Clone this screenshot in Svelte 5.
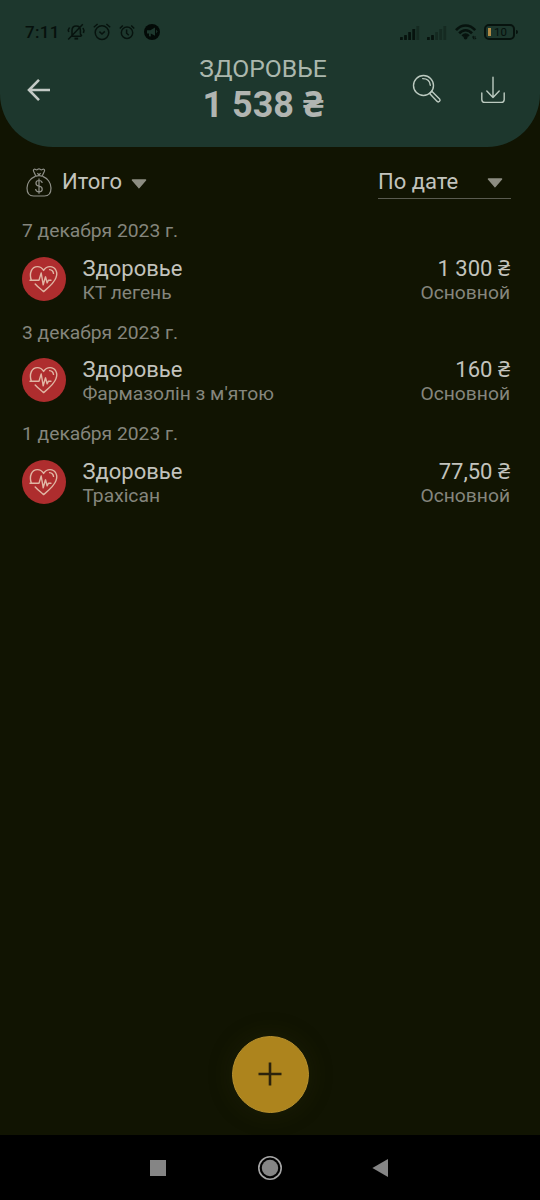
<script>
  let total = $state('1 538 ₴');
  let groups = $state([
    { date: '7 декабря 2023 г.', category: 'Здоровье', note: 'КТ легень', amount: '1 300 ₴', account: 'Основной' },
    { date: '3 декабря 2023 г.', category: 'Здоровье', note: "Фармазолін з м'ятою", amount: '160 ₴', account: 'Основной' },
    { date: '1 декабря 2023 г.', category: 'Здоровье', note: 'Трахісан', amount: '77,50 ₴', account: 'Основной' },
  ]);

  // Number of lit bars per SIM
  const sims = [4, 2];
</script>

{#snippet caret()}
  <svg class="caret" width="16" height="10" viewBox="0 0 16 10">
    <path d="M1.5 1h13L8 8.6z" stroke-width="1.6" stroke-linejoin="round" />
  </svg>
{/snippet}

<main>
  <header>
    <div class="status">
      <span class="time">7:11</span>
      <!-- muted bell -->
      <svg class="bell" width="18" height="18" viewBox="0 0 18 18">
        <path d="M4 13.2h10.5M5 13V7.6C5 4.8 6.8 3 9.2 3s4.2 1.8 4.2 4.6V11l1.4 2M1.2 16.5L15.8 1.2M2.6 4.5L1.2 7l.6 2M16 5l1 2.5-.6 2.5" />
        <path d="M7.500 15.6h3.6" stroke-width="2" />
      </svg>
      <svg class="alarm" width="18" height="18" viewBox="0 0 18 18">
        <circle cx="9" cy="9.6" r="6.8" />
        <path d="M.8 4.2L4.6 1M17.2 4.2L13.4 1M6.4 8.6L9 11l2.8-2.6" />
      </svg>
      <svg class="alarm small" width="16" height="16" viewBox="0 0 16 16">
        <circle cx="8" cy="8.8" r="5.7" />
        <path d="M.8 4.6L3.8 1.4M15.2 4.6l-3-3.2M7.6 5.6v3.6l2.2 2" />
      </svg>
      <svg class="horn" width="16" height="16" viewBox="0 0 16 16">
        <circle cx="8" cy="8" r="8" />
        <path d="M3 6.2h3.4L11 3.6v8.2L6.8 9.6v3L5 12.2V9.6H3zM12.2 5.6l1.4 2-1.4 2z" />
      </svg>
      <div class="signals">
        {#each sims as lit}
          <svg width="20" height="15" viewBox="0 0 20 15">
            {#each [3, 5, 8, 11, 14] as h, i}
              <rect class:off={i >= lit} x={i * 4.1} y={15 - h} width="2.8" height={h} rx=".5" />
            {/each}
          </svg>
        {/each}
      </div>
      <svg class="wifi" width="22" height="16" viewBox="0 0 22 16">
        <path d="M1 6.2C6.4-.1 14.8-.1 20.2 6.2M4.2 9.4c3.8-4.2 9-4.2 12.8 0M7.4 12.2c2-2.1 4.4-2.1 6.4 0" />
        <circle cx="10.6" cy="13.6" r="1.9" />
        <path class="tiny" d="M18.4 15.2v-3l-1.3 1.2M20 12.2v3l1.2-1.2" />
      </svg>
      <div class="battery"><i></i><span>10</span></div>
    </div>
    <div class="bar">
      <svg class="back" width="24" height="24" viewBox="0 0 24 24">
        <path d="M23 12H2.2M12 1.8L2 12l10 10.2" />
      </svg>
      <div class="heading">
        <h1>ЗДОРОВЬЕ</h1>
        <strong>{total}</strong>
      </div>
      <svg class="tool search" width="30" height="30" viewBox="0 0 30 30">
        <circle cx="11.5" cy="11.5" r="10" />
        <path d="M10.7 4.6c4.6 0 7.2 2.6 7.6 6.6M17.6 19.4l2.2-2.2 7.8 7.8c1.4 1.6-.8 3.8-2.4 2.4z" />
      </svg>
      <svg class="tool" width="26" height="28" viewBox="0 0 26 28">
        <path d="M13 1.2v20.4M6.8 15L13 21.6l6.2-6.6M1.8 17v6.4q0 3 3 3h16.4q3 0 3-3V17" />
      </svg>
    </div>
  </header>

  <div class="filters">
    <svg class="bag" width="26" height="29" viewBox="0 0 26 29">
      <path d="M9.2 8.4C4.4 10.4 1 15 1 20c0 5 2.6 8 6.6 8h10.8c4 0 6.6-3 6.6-8 0-5-3.4-9.6-8.2-11.6" />
      <path d="M9.2 8.4q3.8-1.4 7.6 0M9.6 7.4L7.6 3.2c-.6-1.6.6-2.6 2-1.8 1 .6 1.4.6 2 0q1.4-1.2 2.8 0c.6.6 1 .6 2 0 1.4-.8 2.6.2 2 1.8l-2 4.2M11.4 5.2L13 7l1.6-1.8" />
      <path d="M16.2 15c-.2-1.6-1.4-2.5-3.2-2.5-3.9 0-4.2 5 0 5.6 4.4.6 4.2 5.7 0 5.7-1.9 0-3.2-1-3.4-2.8M13 10.6v15.2" />
    </svg>
    <span class="scope">Итого</span>
    {@render caret()}
    <div class="sort">
      <span>По дате</span>
      {@render caret()}
    </div>
  </div>

  <section>
    {#each groups as item}
      <h2>{item.date}</h2>
      <div class="row">
        <div class="badge">
          <svg width="30" height="28" viewBox="0 0 30 28">
            <path d="M1 15.2h9l2.200-7.2 2 11.800 2.300-8 1.600 6 1.400-2.600H22" />
            <path d="M2.200 14.800C0 8 2.800 1.600 8.400 1.600c3 0 4.800 1.600 6.200 3.800 1.400-2.200 3.400-3.800 6.400-3.800 5.200 0 8.200 5.400 6 11-1.800 5.400-7 9.400-12.400 14-3-2.600-6-4.800-8.400-7.600M20.600 4.600c2.200.2 3.600 1.600 3.900 3.800" />
          </svg>
        </div>
        <div class="info">
          <span class="main">{item.category}</span>
          <span class="sub">{item.note}</span>
        </div>
        <div class="info right">
          <span class="main">{item.amount}</span>
          <span class="sub">{item.account}</span>
        </div>
      </div>
    {/each}
  </section>

  <button class="add" aria-label="Добавить">
    <svg width="24" height="24" viewBox="0 0 24 24"><path d="M12 .5v23M.5 12h23" /></svg>
  </button>

  <nav>
    <svg width="240" height="26" viewBox="0 0 240 26">
      <rect x="0" y="5" width="16" height="16" />
      <circle cx="120" cy="13" r="8.2" />
      <circle class="ring" cx="120" cy="13" r="11.2" />
      <path d="M222.4 13L238 4v18z" />
    </svg>
  </nav>
</main>

<style>
  :global(body) {
    background: #111402;
  }

  main {
    display: flex;
    flex-direction: column;
    align-items: stretch;
    box-sizing: border-box;
    width: 540px;
    height: 1200px;
    overflow: hidden;
    background: #111402;
    color: #c2c3bd;
    font-family: Roboto, 'Noto Sans', sans-serif;
  }

  svg {
    display: block;
    flex: none;
    fill: none;
  }

  header {
    box-sizing: border-box;
    height: 147px;
    background: #1d372d;
    border-radius: 0 0 53px 53px;
  }

  .status {
    display: flex;
    align-items: center;
    box-sizing: border-box;
    height: 55px;
    padding: 9px 22px 0 25px;
    color: #06100c;
  }

  .status svg {
    stroke: #07130e;
    stroke-width: 1.5;
  }

  .time {
    width: 42px;
    font-size: 17px;
    font-weight: 500;
    letter-spacing: 0.3px;
  }

  .alarm {
    margin-left: 8px;
  }

  .alarm.small {
    margin-left: 8px;
  }

  .status .horn {
    margin-left: 9px;
    stroke: none;
    fill: #030a07;
  }

  .horn path {
    fill: #1d372d;
  }

  .signals {
    display: flex;
    gap: 7px;
    margin-left: auto;
  }

  .signals svg {
    stroke: none;
    fill: #07130e;
  }

  .signals .off {
    fill: #152a21;
  }

  .status .wifi {
    margin-left: 8px;
    stroke-width: 2.6;
  }

  .wifi circle {
    stroke: none;
    fill: #07130e;
  }

  .wifi .tiny {
    stroke-width: 1;
  }

  .battery {
    position: relative;
    display: flex;
    align-items: center;
    box-sizing: border-box;
    width: 31px;
    height: 16px;
    margin: 0 3px 0 7px;
    padding-left: 2px;
    border: 2px solid #07130e;
    border-radius: 5px;
    font-size: 11.5px;
  }

  .battery::after {
    content: '';
    position: absolute;
    right: -5px;
    top: 4px;
    width: 2px;
    height: 4px;
    border-radius: 0 2px 2px 0;
    background: #07130e;
  }

  .battery i {
    width: 3px;
    height: 8px;
    margin-right: 3px;
    background: #b08a45;
  }

  .bar {
    display: flex;
    align-items: flex-start;
    padding: 0 33px 0 27px;
  }

  .back {
    margin-top: 23px;
    stroke: #c3c9c5;
    stroke-width: 2.6;
  }

  .heading {
    display: flex;
    flex-direction: column;
    align-items: center;
    width: 200px;
    margin-left: 112px;
  }

  h1 {
    margin: 0;
    font-size: 24.7px;
    font-weight: 400;
    line-height: 28px;
    color: #abb7ad;
  }

  strong {
    font-size: 36px;
    font-weight: 700;
    line-height: 44px;
    color: #b1b5b1;
  }

  .tool {
    margin-top: 21px;
    stroke: #bccac0;
    stroke-width: 1.4;
    stroke-linecap: round;
    stroke-linejoin: round;
  }

  .search {
    margin: 19px 38px 0 49px;
  }

  .filters {
    display: flex;
    align-items: center;
    box-sizing: border-box;
    height: 68px;
    padding: 1px 29px 0 26px;
    font-size: 22px;
  }

  .bag {
    margin-top: 2px;
    stroke: #8f9088;
    stroke-width: 1.2;
  }

  .scope {
    margin: 0 9px 0 10px;
  }

  .caret {
    margin-top: 4px;
    fill: #8d8d82;
    stroke: #8d8d82;
  }

  .sort {
    display: flex;
    align-items: center;
    justify-content: space-between;
    box-sizing: border-box;
    width: 133px;
    height: 35px;
    margin-left: auto;
    padding-right: 8px;
    border-bottom: 1px solid #5a5b50;
  }

  h2 {
    margin: 0;
    padding-left: 22px;
    font-size: 19.25px;
    font-weight: 400;
    line-height: 32px;
    color: #85867d;
  }

  .row {
    display: flex;
    box-sizing: border-box;
    height: 69.7px;
    padding: 9.5px 30px 0 22px;
  }

  .badge {
    display: flex;
    align-items: center;
    justify-content: center;
    width: 44px;
    height: 44px;
    margin-right: 16.4px;
    border-radius: 50%;
    background: #ae2d2e;
  }

  .badge svg {
    stroke: #e0b6a4;
    stroke-width: 1.4;
    stroke-linecap: round;
    stroke-linejoin: round;
  }

  .info {
    display: flex;
    flex-direction: column;
  }

  .right {
    margin-left: auto;
    text-align: right;
  }

  .main {
    font-size: 22px;
    line-height: 24px;
  }

  .sub {
    font-size: 19.25px;
    line-height: 24px;
    color: #85867d;
  }

  .add {
    display: flex;
    align-items: center;
    justify-content: center;
    align-self: center;
    width: 77px;
    height: 77px;
    margin: auto 0 22px;
    padding: 0 1px 1px 0;
    border: 1px solid #b9922f;
    border-radius: 50%;
    background: #ad841d;
    box-shadow: 0 0 24px rgba(60, 60, 20, 0.25);
  }

  .add svg {
    stroke: #2b220c;
    stroke-width: 2.6;
  }

  nav {
    display: flex;
    align-items: center;
    justify-content: center;
    height: 65px;
    background: #000;
  }

  nav svg {
    fill: #858585;
  }

  nav .ring {
    fill: none;
    stroke: #a5a5a5;
    stroke-width: 1.6;
  }
</style>
